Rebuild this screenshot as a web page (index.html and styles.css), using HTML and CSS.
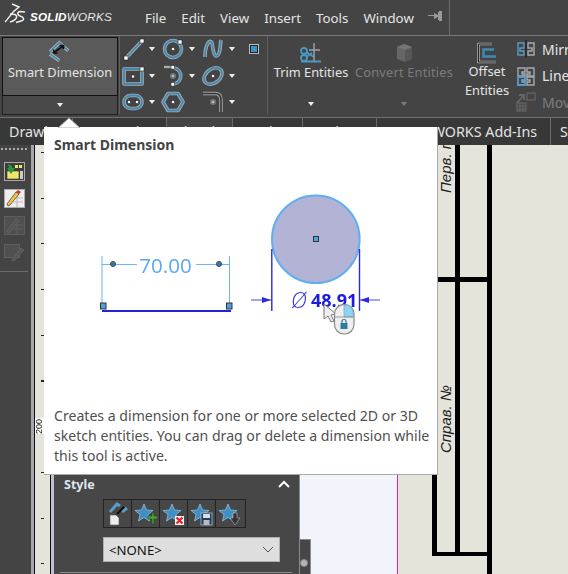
FILE: index.html
```
<!DOCTYPE html>
<html lang="en">
<head>
	<meta charset="UTF-8">
	<meta name="viewport" content="width=device-width, initial-scale=1.0">
	<title>SOLIDWORKS - Smart Dimension</title>
	<link rel="stylesheet" href="styles.css">
</head>
<body>

	<header class="titlebar">
		<div class="logo">
			<svg width="26" height="24" viewBox="0 0 26 24" fill="none" stroke="#eee" stroke-width="1.5">
				<path d="M11 3 L18 6 L12 11 M14 9 C10 13 7 18 4 21"/>
				<path d="M9 13 L14 13.500 C17 15 16 19 9 21"/>
				<path d="M24 11 L19 10.500 C16 11 16 14 19 15 C23 16 24 19 20 20 L15 21.500"/>
			</svg>
			<span class="logo-text"><b>SOLID</b>WORKS</span>
		</div>
		<nav class="menu">
			<span>File</span>
			<span>Edit</span>
			<span>View</span>
			<span>Insert</span>
			<span>Tools</span>
			<span>Window</span>
		</nav>
		<svg class="pin" width="16" height="10" viewBox="0 0 16 10" fill="#999">
			<path d="M0 4 H6 V5 H0 Z M6 2 L10 4 V1 H11 V0 H14 V10 H11 V9 H10 V6 L6 8 Z"/>
		</svg>
		<span class="title-sep"></span>
	</header>

	<section class="ribbon">
		<div class="smart">
			<div class="smart-main">
				<svg width="24" height="24" viewBox="0 0 24 24" fill="none">
					<path d="M2 11.700 L11.300 2.700 L20.300 10.700 M2 14 L11.300 20.700" stroke="#b0b4b6" stroke-width="3.400"/>
					<path d="M2 11.700 L11.300 2.700 L20.300 10.700 M2 14 L11.300 20.700" stroke="#3f8ab5" stroke-width="1.600"/>
					<path d="M6 12.500 L15 6 M5.500 9.500 L6 13 L9.500 13 M11.500 5.500 L15.500 5.500 L15.500 9" stroke="#111" stroke-width="1.700"/>
				</svg>
				<span>Smart Dimension</span>
			</div>
			<div class="smart-more"><i class="caret"></i></div>
		</div>

		<div class="sketch-tools">
			<span class="tool"><svg width="24" height="24" viewBox="0 0 24 24" fill="none">
				<path class="halo" d="M5 21 L21 4"/><path class="ink" d="M5 21 L21 4"/>
				<rect class="node" x="3" y="19" width="4" height="4"/><rect class="node" x="19" y="2" width="4" height="4"/>
			</svg><i class="caret"></i></span>
			<span class="tool"><svg width="24" height="24" viewBox="0 0 24 24" fill="none">
				<circle class="halo" cx="12" cy="12" r="8.500"/><circle class="ink" cx="12" cy="12" r="8.500"/>
				<rect class="node" x="10.500" y="10.500" width="3" height="3"/><rect class="node" x="17" y="3" width="4" height="4"/>
			</svg><i class="caret"></i></span>
			<span class="tool"><svg width="24" height="24" viewBox="0 0 24 24" fill="none">
				<path class="halo" d="M4 20 C4 8 9 1 11 6 C12 12 13 22 17 18 C20 14 19 7 20 3"/>
				<path class="ink" d="M4 20 C4 8 9 1 11 6 C12 12 13 22 17 18 C20 14 19 7 20 3"/>
			</svg><i class="caret"></i></span>
			<span class="point"></span>

			<span class="tool"><svg width="24" height="24" viewBox="0 0 24 24" fill="none">
				<rect class="halo" x="3" y="5" width="18" height="15"/><rect class="ink" x="3" y="5" width="18" height="15"/>
				<rect class="node" x="10.500" y="11" width="3" height="3"/><rect class="node" x="19" y="3" width="4" height="4"/>
			</svg><i class="caret"></i></span>
			<span class="tool"><svg width="24" height="24" viewBox="0 0 24 24" fill="none">
				<path d="M3 3 H12" stroke="#aaa" stroke-width="2.400"/>
				<path class="halo" d="M13 4 C22 6 22 18 13 20"/><path class="ink" d="M13 4 C22 6 22 18 13 20"/>
				<circle cx="12" cy="12" r="3" fill="#777"/><circle cx="12" cy="12" r="1.200" fill="#bbb"/>
				<rect class="node" x="10" y="1.500" width="3.600" height="3.600"/><rect class="node" x="10" y="18.500" width="3.600" height="3.600"/>
			</svg><i class="caret"></i></span>
			<span class="tool"><svg width="24" height="24" viewBox="0 0 24 24" fill="none">
				<ellipse class="halo" cx="12" cy="12" rx="10" ry="7" transform="rotate(-38 12 12)"/>
				<ellipse class="ink" cx="12" cy="12" rx="10" ry="7" transform="rotate(-38 12 12)"/>
				<rect class="node" x="10.500" y="10.500" width="3" height="3"/>
			</svg><i class="caret"></i></span>
			<span class="blank"></span>

			<span class="tool"><svg width="24" height="24" viewBox="0 0 24 24" fill="none">
				<rect class="halo" x="3" y="5.500" width="18" height="13" rx="6.500"/><rect class="ink" x="3" y="5.500" width="18" height="13" rx="6.500"/>
				<rect class="node" x="6.500" y="10.500" width="3" height="3"/><rect class="node" x="14.500" y="10.500" width="3" height="3"/>
			</svg><i class="caret"></i></span>
			<span class="tool"><svg width="24" height="24" viewBox="0 0 24 24" fill="none">
				<path class="halo" d="M7 3.500 H17 L22 12 L17 20.500 H7 L2 12 Z"/><path class="ink" d="M7 3.500 H17 L22 12 L17 20.500 H7 L2 12 Z"/>
				<rect class="node" x="10.500" y="10.500" width="3" height="3"/>
			</svg></span>
			<span class="tool"><svg width="24" height="24" viewBox="0 0 24 24" fill="none">
				<path d="M2 3.500 H14 C18 3.500 20 6 20 10 V22" stroke="#a6a6a6" stroke-width="3.600"/>
				<path d="M2 3.500 H14 C18 3.500 20 6 20 10 V22" stroke="#333" stroke-width="1.600"/>
				<circle cx="12" cy="12" r="3" fill="#777"/><circle cx="12" cy="12" r="1.200" fill="#bbb"/>
			</svg><i class="caret"></i></span>
		</div>

		<div class="big-tool trim">
			<svg width="24" height="24" viewBox="0 0 24 24" fill="none" stroke="#4a98c4" stroke-width="1.800">
				<circle cx="5" cy="10" r="3"/><circle cx="5" cy="17" r="3"/>
				<path d="M7 11 L15 16 M7 16 L13 12 M2 20.500 H22"/>
				<path d="M15 2 V20 M10 9 H21" stroke="#9aa3a8" stroke-width="1.400"/>
			</svg>
			<span class="big-label">Trim Entities</span>
			<i class="caret"></i>
		</div>
		<div class="big-tool convert off">
			<svg width="24" height="24" viewBox="0 0 24 24">
				<path d="M5 6 L12 3 L20 6 V18 L13 21 L5 18 Z" fill="#666"/><path d="M13 9 L20 6 V18 L13 21 Z" fill="#575757"/><path d="M5 6 L12 3 L20 6 L13 9 Z" fill="#747474"/>
			</svg>
			<span class="big-label">Convert Entities</span>
			<i class="caret"></i>
		</div>
		<div class="big-tool offset">
			<svg width="24" height="24" viewBox="0 0 24 24" fill="none">
				<path d="M17 3 H3.500 V21 H21" stroke="#a8acae" stroke-width="2.600"/>
				<path d="M17 3 H3.500 V21 H21" stroke="#222" stroke-width="1"/>
				<path d="M19 8.500 H8.500 V15.500 H21" stroke="#3f8ab5" stroke-width="2.400"/>
			</svg>
			<span class="big-label">Offset Entities</span>
		</div>

		<div class="side-tools">
			<div class="side-row">
				<svg width="20" height="20" viewBox="0 0 20 20" fill="none" stroke="#a6abae" stroke-width="1.400">
					<path d="M10 1 V19" stroke="#222"/><path d="M2 4 H8 V9 H4 V12 H8 V16 H2 Z" stroke="#5a9cc4"/><path d="M18 4 H12 V9 H16 V12 H12 V16 H18 Z"/>
				</svg>
				<span>Mirror Entities</span>
			</div>
			<div class="side-row">
				<svg width="20" height="20" viewBox="0 0 20 20" fill="none" stroke="#a6abae" stroke-width="1.400">
					<path d="M2 2 H9 V6 H6 V8 H9 V10 H2 Z M11 2 H18 V10 H11 V8 H14 V6 H11 Z"/><path d="M2 11 H9 V14 H6 V16 H9 V19 H2 Z" stroke="#5a9cc4" stroke-width="1.800"/><path d="M11 11 H18 V19 H11 V16 H14 V14 H11 Z"/>
				</svg>
				<span>Linear Sketch Pattern</span>
			</div>
			<div class="side-row off">
				<svg width="20" height="20" viewBox="0 0 20 20" fill="none" stroke="#666" stroke-width="1.200">
					<path d="M1 11 L8 3 M3 3 H8 V8" stroke-width="1.800"/><rect x="11" y="1" width="8" height="7"/><rect x="1" y="11" width="9" height="8"/><path d="M4 11 V19 M7 11 V19 M1 14 H10 M1 17 H10"/>
				</svg>
				<span>Move Entities</span>
			</div>
		</div>
	</section>

	<nav class="tabs">
		<span class="tab t-drawing">Drawing</span>
		<span class="tab t-annot">Annotation</span>
		<span class="tab t-sketch active">Sketch</span>
		<span class="tab t-markup">Markup</span>
		<span class="tab t-eval">Evaluate</span>
		<span class="tab t-addins">SOLIDWORKS Add-Ins</span>
		<span class="tab">Sheet Format</span>
	</nav>

	<main class="workspace">
		<aside class="taskbar">
			<div class="grip"></div>
			<svg class="task-icon" width="21" height="19" viewBox="0 0 21 19">
				<rect x=".5" y=".5" width="20" height="18" fill="#3e3e3e" stroke="#aaa"/>
				<rect x="3" y="9" width="12" height="8" fill="#f2e56b" stroke="#333" stroke-width=".6"/>
				<rect x="11" y="3" width="3" height="3" fill="#f2e56b"/><rect x="15" y="3" width="3" height="3" fill="#f2e56b"/>
				<rect x="16" y="9" width="3" height="8" fill="#ccc"/>
				<path d="M4 2 L8 4 V6 H11 L7 12 L3 6 H5 Z" fill="#1f9a3c"/>
			</svg>
			<svg class="task-icon" width="21" height="19" viewBox="0 0 21 19">
				<rect x=".5" y=".5" width="20" height="18" fill="#eee" stroke="#aaa"/>
				<path d="M9 9 H19 M9 13 H19 M13 5 V18" stroke="#bbb"/>
				<path d="M3 15 L4 17 L6 16 L15 5 L12 3 Z" fill="#f2c64b" stroke="#333" stroke-width=".7"/>
				<path d="M12 3 L14 1 L17 3 L15 5 Z" fill="#c8352f"/>
			</svg>
			<svg class="task-icon" width="21" height="19" viewBox="0 0 21 19">
				<rect x=".5" y=".5" width="20" height="18" fill="#505050" stroke="#5e5e5e"/>
				<path d="M9 9 H19 M9 13 H19 M13 5 V18" stroke="#5e5e5e"/>
				<path d="M3 15 L4 17 L6 16 L15 5 L12 3 Z" fill="#555" stroke="#666" stroke-width=".8"/>
			</svg>
			<svg class="task-icon" width="21" height="19" viewBox="0 0 21 19">
				<rect x=".5" y="1.500" width="15" height="13" fill="#505050" stroke="#5e5e5e"/>
				<path d="M8 17 L9 18 L11 17 L20 7 L17 5 Z" fill="#555" stroke="#666" stroke-width=".8"/>
			</svg>
			<div class="task-sep"></div>
		</aside>
		<div class="strip"></div>

		<div class="ruler">
			<span class="ruler-label">200</span>
		</div>

		<div class="tree-edge"></div>

		<div class="manager">
			<div class="panel">
				<div class="panel-head">
					<span>Style</span>
					<svg width="12" height="8" viewBox="0 0 12 8" fill="none" stroke="#fff" stroke-width="2"><path d="M1 7 L6 2 L11 7"/></svg>
				</div>
				<div class="style-tools">
					<span class="style-btn"><svg width="22" height="24" viewBox="0 0 22 24" fill="none">
						<path d="M3 13 H9 L12 16 V23 H3 Z" fill="#eee" stroke="#555" stroke-width=".6"/>
						<path d="M3 10 L10 2 L13 4 M15 10 L20 6" stroke="#5a9cc4" stroke-width="3"/>
						<path d="M10 12 L17 5" stroke="#111" stroke-width="2"/>
					</svg></span>
					<span class="style-btn"><svg width="22" height="24" viewBox="0 0 22 24">
						<polygon class="star" points="9,2 11.5,8 18,8.5 13,12.5 14.5,19 9,15.5 3.5,19 5,12.5 0,8.5 6.5,8"/>
						<path d="M13 14 H17 V11 H19 V14 H22 V17 H19 V22 H17 V17 H13 Z" fill="#4aa02c" stroke="#1c4d12" stroke-width=".5"/>
					</svg></span>
					<span class="style-btn"><svg width="22" height="24" viewBox="0 0 22 24">
						<polygon class="star" points="9,2 11.5,8 18,8.5 13,12.5 14.5,19 9,15.5 3.5,19 5,12.5 0,8.5 6.5,8"/>
						<rect x="12" y="14" width="9" height="9" fill="#f0f0f0"/>
						<path d="M13.500 15.500 L19.500 21.500 M19.500 15.500 L13.500 21.500" stroke="#d5282c" stroke-width="2.200"/>
					</svg></span>
					<span class="style-btn"><svg width="22" height="24" viewBox="0 0 22 24">
						<polygon class="star" points="9,2 11.5,8 18,8.5 13,12.5 14.5,19 9,15.5 3.5,19 5,12.5 0,8.5 6.5,8"/>
						<rect x="10" y="11" width="11" height="12" fill="#1b3f66" stroke="#ddd" stroke-width=".6"/>
						<rect x="12" y="12" width="7" height="4" fill="#ddd"/><rect x="12.500" y="18" width="6" height="5" fill="#bbb"/>
					</svg></span>
					<span class="style-btn"><svg width="22" height="24" viewBox="0 0 22 24">
						<polygon class="star" points="9,2 11.5,8 18,8.5 13,12.5 14.5,19 9,15.5 3.5,19 5,12.5 0,8.5 6.5,8"/>
						<path d="M14 11 H18 V16 H21 L16 23 L11 16 H14 Z" fill="#333" stroke="#bbb" stroke-width=".6"/>
					</svg></span>
				</div>
				<div class="style-select">
					<span>&lt;NONE&gt;</span>
					<svg width="12" height="7" viewBox="0 0 12 7" fill="none" stroke="#555" stroke-width="1"><path d="M1 1 L6 6 L11 1"/></svg>
				</div>
				<div class="panel-rule"></div>
			</div>
			<div class="panel-grip"><i></i></div>
		</div>

		<div class="sheet">
			<svg width="170" height="429" viewBox="398 145 170 429">
				<rect x="432" y="474" width="5" height="81"/>
				<rect x="455" y="145" width="5" height="408"/>
				<rect x="487" y="145" width="5" height="429"/>
				<rect x="432" y="277" width="56" height="5"/>
				<rect x="432" y="552" width="56" height="4"/>
				<text class="sheet-label" transform="translate(451 193) rotate(-90)">Перв. примен.</text>
				<text class="sheet-label" transform="translate(451 453) rotate(-90)">Справ. №</text>
			</svg>
		</div>
	</main>

	<div class="tooltip">
		<svg class="tooltip-arrow" width="30" height="10" viewBox="0 0 30 10"><path d="M3 10 L14 0 L25 10 Z" fill="#fff" stroke="#aaa"/></svg>
		<h1>Smart Dimension</h1>
		<svg class="demo" width="392" height="240" viewBox="44 159 392 240" fill="none">
			<path d="M102 255 V308 M229.500 255 V308 M102 263.500 H137 M196 263.500 H229" stroke="#6fb4f2" stroke-width="1"/>
			<text class="demo-70" x="165.500" y="272" text-anchor="middle">70.00</text>
			<circle cx="113" cy="263" r="2.500" fill="#2f7fb5" stroke="#444"/>
			<circle cx="219" cy="263" r="2.500" fill="#2f7fb5" stroke="#444"/>
			<path d="M102 310 H231" stroke="#2323dd" stroke-width="2"/>
			<rect x="100.500" y="302" width="5.500" height="6" fill="#4aa3df" stroke="#333"/>
			<rect x="226.500" y="302" width="5.500" height="6" fill="#4aa3df" stroke="#333"/>

			<circle cx="315.800" cy="238.300" r="43.800" fill="#b3b3d6" stroke="#62aef2" stroke-width="2"/>
			<rect x="313.500" y="235.500" width="5" height="5" fill="#4aa3df" stroke="#333"/>
			<path d="M271.800 248 V310 M359.500 248 V310" stroke="#2a2ae0" stroke-width="1.400"/>
			<path d="M251 299 H271 M360 299 H380" stroke="#4a4ae8" stroke-width="1.200"/>
			<path d="M271 299 L262 296 V302 Z M360 299 L369 296 V302 Z" fill="#2a2ae0"/>
			<text class="demo-phi" x="291" y="307">Ø</text>
			<text class="demo-48" x="311" y="306">48.91</text>

			<path d="M324 303 L324 318 L328 315 L331 321 L334 320 L331 314 L336 313 Z" fill="#eee" stroke="#777"/>
			<rect x="334.500" y="303.500" width="19.500" height="29.500" rx="9.500" fill="#eee" stroke="#888" stroke-width="1.200"/>
			<path d="M344 304 H346 C351 304 353.500 308 353.500 316 H344 Z" fill="#8fd3f0" stroke="#6a9cb0" stroke-width=".6"/>
			<path d="M335 316 H353.500" stroke="#999"/>
			<rect x="340.500" y="322" width="7" height="6" fill="#2f7d9c"/>
			<path d="M342 322 V320 C342 318 346 318 346 320 V322" stroke="#2f7d9c" stroke-width="1.200"/>
		</svg>
		<p>Creates a dimension for one or more selected 2D or 3D sketch entities. You can drag or delete a dimension while this tool is active.</p>
	</div>

</body>
</html>
```

FILE: styles.css
```
* {
	margin: 0;
	padding: 0;
	box-sizing: border-box;
}

html, body {
	width: 568px;
	height: 574px;
	overflow: hidden;
}

body {
	position: relative;
	display: flex;
	flex-direction: column;
	background-color: #444;
	font-family: "Noto Sans", "Open Sans", sans-serif;
	font-size: 13.3px;
	color: #e4e4e4;
}

/* title bar */
.titlebar {
	display: flex;
	align-items: center;
	height: 36px;
	flex: none;
	border-bottom: 1px solid #7a7a7a;
}

.logo {
	display: flex;
	align-items: flex-start;
	gap: 3px;
	width: 145px;
	height: 35px;
	padding: 1px 0 0 1px;
}

.logo-text {
	margin-top: 9px;
	font-family: "Liberation Sans", sans-serif;
	font-style: italic;
	font-size: 11.7px;
	letter-spacing: .2px;
	color: #e8e8e8;
}

.logo-text b {
	color: #fff;
	font-weight: 700;
}

.menu {
	display: flex;
	gap: 15px;
}

.pin {
	margin: 0 0 3px 14px;
}

.title-sep {
	align-self: stretch;
	width: 1px;
	margin-left: 5px;
	background-color: #6a6a6a;
}

/* ribbon */
.ribbon {
	display: flex;
	height: 81px;
	flex: none;
	white-space: nowrap;
	overflow: hidden;
	font-size: 12.8px;
}

.smart {
	width: 116px;
	margin: 1px 0 2px 2px;
	flex: none;
	display: flex;
	flex-direction: column;
}

.smart-main {
	height: 59px;
	background-color: #5a5a5a;
	border: 1px solid #111;
	display: flex;
	flex-direction: column;
	align-items: center;
	padding-top: 2px;
	line-height: 16px;
}

.smart-more {
	flex: 1;
	background-color: #494949;
	border: 1px solid #222;
	border-top: 0;
	display: flex;
	align-items: center;
	justify-content: center;
}

.caret {
	display: block;
	width: 0;
	height: 0;
	border-left: 3.500px solid transparent;
	border-right: 3.500px solid transparent;
	border-top: 4px solid #eee;
}

.sketch-tools {
	width: 149px;
	flex: none;
	margin-left: 1px;
	padding-left: 1px;
	height: 78px;
	border-left: 1px solid #5f5f5f;
	border-right: 1px solid #5f5f5f;
	display: grid;
	grid-template-columns: 40px 40px 40px 20px;
	grid-auto-rows: 26.500px;
}

.tool {
	display: flex;
	align-items: center;
	gap: 4px;
}

.point {
	width: 10px;
	height: 10px;
	margin: 8px 0 0 8px;
	background-color: #3f94c4;
	border: 1px solid #bbb;
	outline: 1px solid #222;
	outline-offset: -2px;
}

.halo, .ink {
	stroke-linejoin: round;
}

.halo {
	stroke: #a9adb0;
	stroke-width: 3.600;
}

.ink {
	stroke: #3f8ab5;
	stroke-width: 1.800;
}

.node {
	fill: #fff;
	stroke: #222;
	stroke-width: .6;
}

.big-tool {
	display: flex;
	flex-direction: column;
	align-items: center;
	flex: none;
	padding-top: 5px;
	position: relative;
	height: 78px;
	line-height: 16px;
}

.big-tool .caret {
	position: absolute;
	bottom: 8px;
	left: 50%;
	margin-left: -3px;
}

.big-label {
	margin-top: -1px;
}

.trim {
	width: 86px;
}

.convert {
	width: 100px;
	letter-spacing: .2px;
}

.offset {
	width: 62px;
	padding-left: 4px;
}

.offset .big-label {
	white-space: normal;
	text-align: center;
	line-height: 19px;
	width: 50px;
	margin-top: -3px;
}

.off {
	color: #7c7c7c;
}

.off .caret {
	border-top-color: #7c7c7c;
}

.side-tools {
	flex: none;
	font-size: 14px;
}

.side-row {
	display: flex;
	align-items: center;
	gap: 6px;
	height: 26.500px;
}

/* tabs */
.tabs {
	display: flex;
	height: 28px;
	flex: none;
	background-color: #383838;
	border-top: 1px solid #707070;
	white-space: nowrap;
	font-size: 14.3px;
	line-height: 28px;
}

.tab {
	padding: 0 9px;
	border-right: 1px solid #6a6a6a;
	flex: none;
}

.t-drawing { width: 73px; }
.t-annot { width: 94px; }
.t-sketch { width: 66px; }
.t-markup { width: 70px; }
.t-eval { width: 74px; }
.t-addins { width: 174px; padding: 0 0 0 13px; }

.active {
	background-color: #444;
}

/* work area */
.workspace {
	flex: 1;
	display: flex;
	min-height: 0;
	background-color: #e4e4da;
}

.taskbar {
	width: 31px;
	flex: none;
	background-color: #444;
	display: flex;
	flex-direction: column;
	align-items: center;
	padding-right: 3px;
	overflow: hidden;
}

.grip {
	width: 27px;
	height: 2px;
	margin: 3px 0 12px;
	background: repeating-linear-gradient(90deg, #aaa 0 2px, #444 2px 4px);
}

.task-icon {
	margin-bottom: 8px;
	flex: none;
}

.task-sep {
	align-self: stretch;
	height: 1px;
	margin-top: 1px;
	background-color: #6a6a6a;
}

.strip {
	width: 3px;
	flex: none;
	background-color: #a5a7ad;
}

.ruler {
	width: 17px;
	flex: none;
	position: relative;
	background-color: #e4e4da;
	border-left: 1px solid #111;
	border-right: 1px solid #111;
	background-image: repeating-linear-gradient(180deg, #222 0 1px, transparent 1px 45.7px);
	background-size: 3px 100%;
	background-repeat: no-repeat;
	background-position: 6px 6.600px;
}

.ruler-label {
	position: absolute;
	left: 0;
	top: 273px;
	width: 9px;
	height: 16px;
	background-color: #fff;
	color: #111;
	font-family: "Liberation Sans", sans-serif;
	font-size: 9px;
	line-height: 9px;
	writing-mode: vertical-rl;
	transform: rotate(180deg);
	text-align: center;
}

.tree-edge {
	width: 3px;
	flex: none;
	background-color: #bcc0cc;
}

.manager {
	width: 344px;
	flex: none;
	display: flex;
	align-items: flex-end;
	justify-content: flex-start;
	background-color: #f2f4fb;
	border-right: 1px solid #e020d0;
}

.panel {
	width: 246px;
	height: 100%;
	flex: none;
	background-color: #474747;
	border-right: 1px solid #8a8a8a;
	padding: 329px 6px 0 10px;
}

.panel-head {
	display: flex;
	align-items: center;
	justify-content: space-between;
	height: 20px;
	padding-right: 3px;
	font-size: 12.5px;
	font-weight: 700;
	color: #dfe6f2;
}

.style-tools {
	display: flex;
	width: 143px;
	margin: 5px 0 0 39px;
	border: 1px solid #222;
}

.style-btn {
	width: 28px;
	height: 27px;
	display: flex;
	align-items: center;
	justify-content: center;
	border-right: 1px solid #222;
}

.style-btn:last-child {
	border-right: 0;
}

.star {
	fill: #3f8fc4;
	stroke: #9cc8e4;
	stroke-width: .7;
}

.style-select {
	display: flex;
	align-items: center;
	justify-content: space-between;
	width: 177px;
	height: 25px;
	margin: 9px 0 0 39px;
	padding: 0 5px;
	background-color: #dedede;
	border: 1px solid #b0b0b0;
	color: #111;
	font-size: 13.2px;
}

.panel-rule {
	height: 1px;
	margin: 10px 1px 0 -4px;
	background-color: #8a8a8a;
}

.panel-grip {
	width: 11px;
	height: 35px;
	background-color: #474747;
	border: 1px solid #8a8a8a;
	border-left: 0;
	border-bottom: 0;
	flex: none;
	display: flex;
	align-items: flex-end;
	padding: 0 0 7px 0;
}

.panel-grip i {
	display: block;
	width: 8px;
	height: 8px;
	border-radius: 50%;
	background-color: #b5b5b5;
	border: 1px solid #8a8a8a;
}

.sheet {
	flex: 1;
	overflow: hidden;
}

.sheet svg {
	display: block;
	fill: #000;
}

.sheet-label {
	font-family: "Liberation Sans", sans-serif;
	font-style: italic;
	font-size: 15px;
	fill: #222;
}

/* tooltip */
.tooltip {
	position: absolute;
	left: 44px;
	top: 127px;
	width: 394px;
	height: 348px;
	background-color: #fff;
	border-right: 1px solid #aaa;
	border-bottom: 1px solid #aaa;
	color: #505050;
	font-size: 14px;
}

.tooltip-arrow {
	position: absolute;
	left: 11px;
	top: -9px;
}

.tooltip h1 {
	font-size: 14px;
	font-weight: 700;
	color: #444;
	padding: 8px 0 0 10px;
	line-height: 20px;
}

.demo {
	display: block;
	margin-top: 5px;
	filter: blur(.4px);
}

.demo text {
	font-family: "Open Sans", "Noto Sans", sans-serif;
}

.demo-70 {
	font-size: 20.5px;
	font-weight: 500;
	fill: #5aa8f0;
}

.demo-48 {
	font-size: 18px;
	font-weight: 700;
	fill: #1c1ce0;
}

.demo-phi {
	font-size: 22px;
	font-style: italic;
	font-weight: 300;
	fill: #3030e0;
}

.tooltip p {
	padding: 6px 6px 0 10px;
	line-height: 20px;
	font-size: 14.1px;
}
```
